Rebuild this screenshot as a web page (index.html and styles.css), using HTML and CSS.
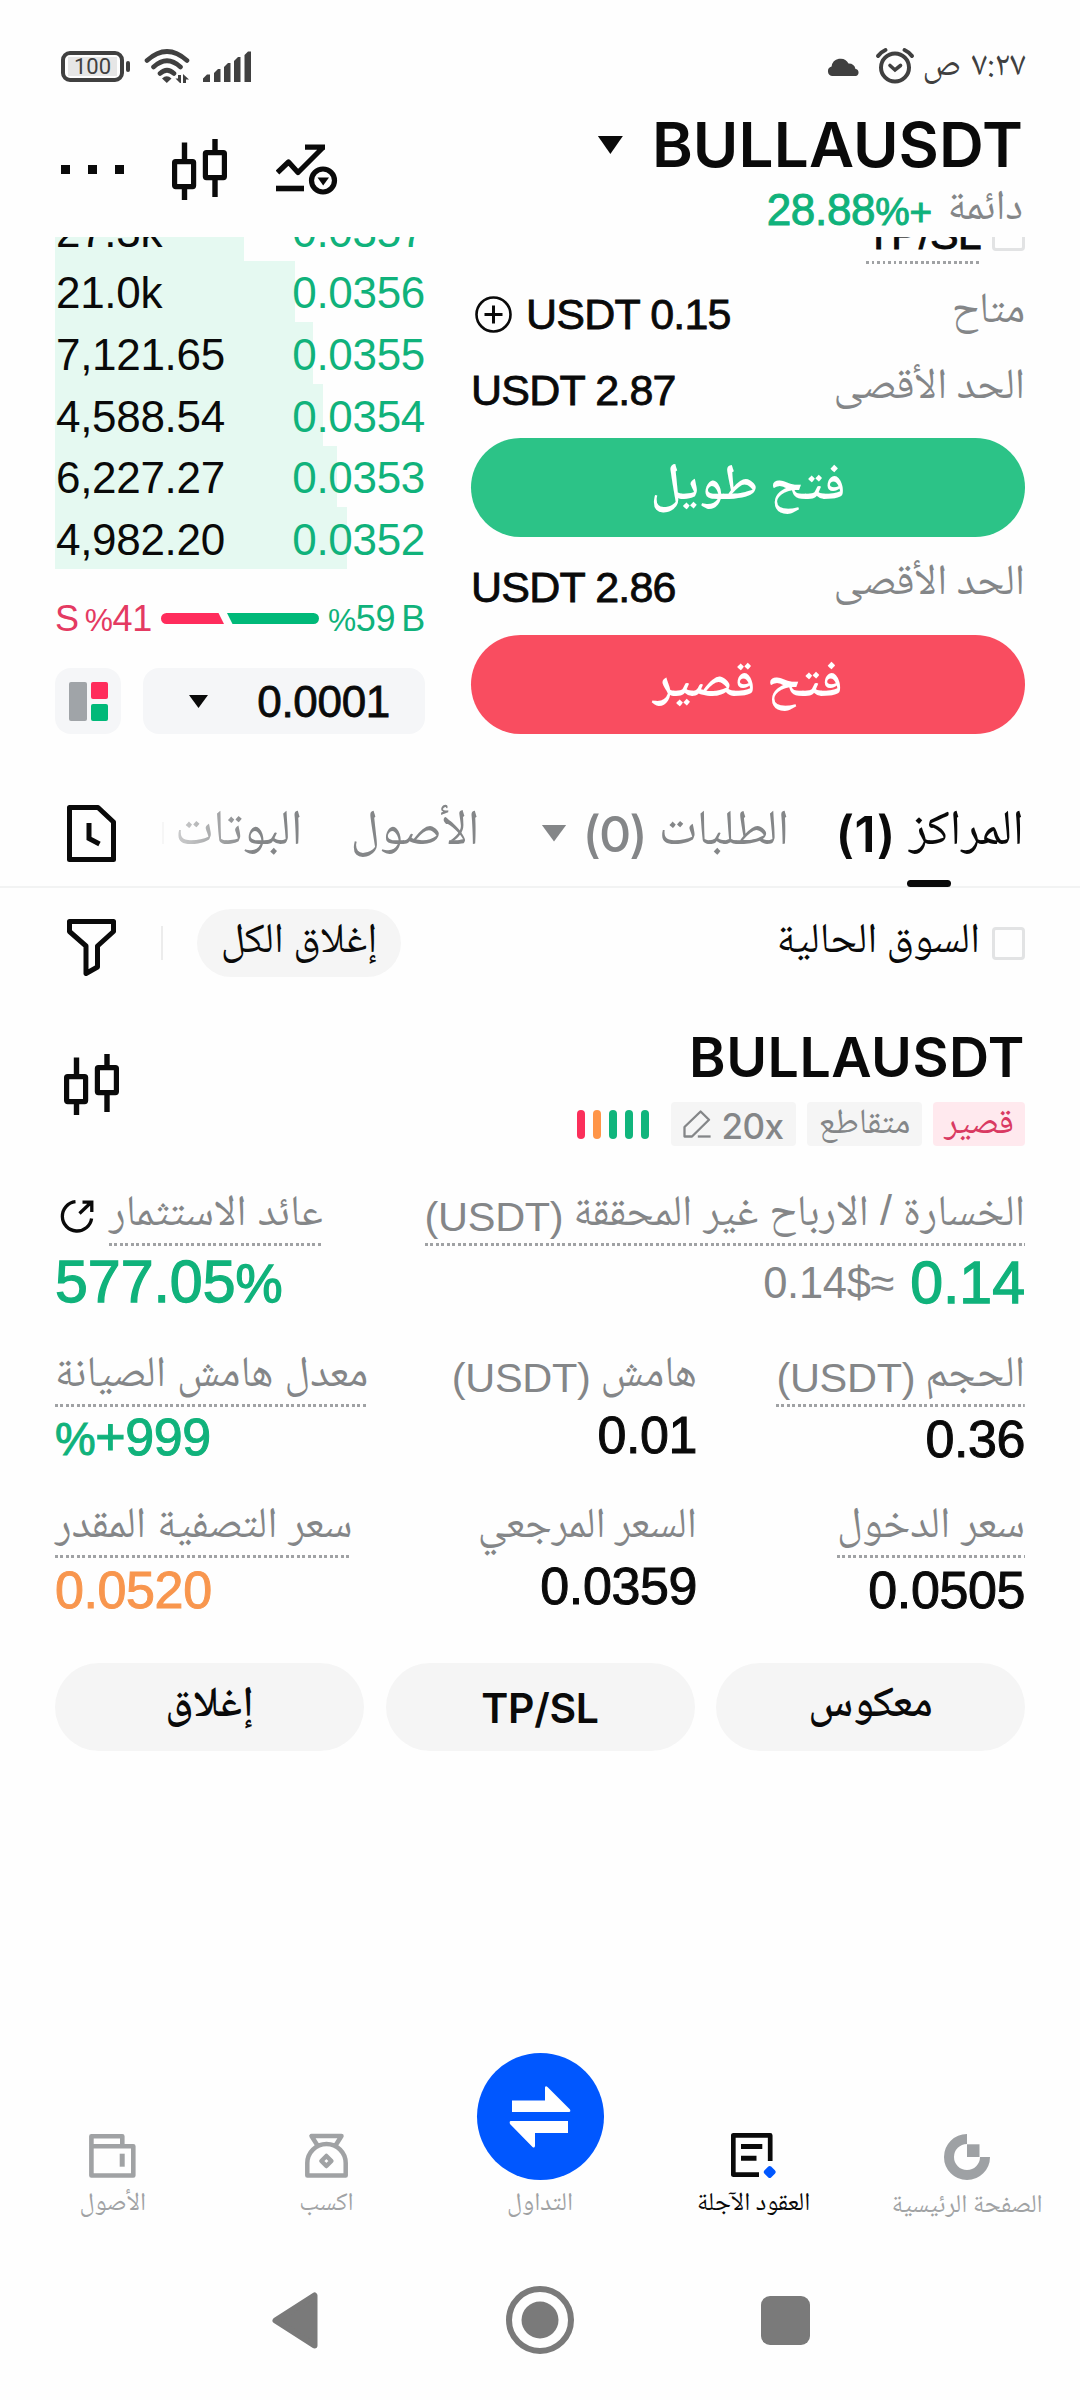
FILE: index.html
```html
<!DOCTYPE html>
<html lang="ar" dir="rtl">
<head>
<meta charset="utf-8">
<title>BULLAUSDT</title>
<link rel="stylesheet" href="styles.css">
</head>
<body>
<svg class="defs" aria-hidden="true">
  <symbol id="candles" viewBox="0 0 55 61">
    <path d="M12.5 3.5V21M12.5 49V61M43 0V12M43 40V58" fill="none" stroke="currentColor" stroke-width="5.4"/>
    <rect x="2.6" y="22.6" width="19" height="25" rx="1" fill="none" stroke="currentColor" stroke-width="5.2"/>
    <rect x="33.4" y="13.6" width="19" height="25" rx="1" fill="none" stroke="currentColor" stroke-width="5.2"/>
  </symbol>
</svg>

<div class="status">
  <div class="status-start">
    <span class="clock">٧:٢٧ ص</span>
    <svg class="alarm" viewBox="0 0 40 38" width="40" height="38"><circle cx="20" cy="20.5" r="14" fill="none" stroke="#404040" stroke-width="4"/><path d="M3 9Q6 5 10.500 3M29.500 3Q34 5 37 9" fill="none" stroke="#404040" stroke-width="4" stroke-linecap="round"/><path d="M15 18.500L20 23L25.500 18.500" fill="none" stroke="#404040" stroke-width="3.600" stroke-linecap="round"/></svg>
    <svg class="cloud" viewBox="0 0 33 19" width="33" height="19"><path d="M5 19A4.800 4.800 0 0 1 4.600 9.600A9 9 0 0 1 21.500 6.500A7 7 0 0 1 28.500 12A3.600 3.600 0 0 1 29 19Z" fill="#404040"/></svg>
  </div>
  <div class="status-end" dir="ltr">
    <div class="battery"><span>100</span></div>
    <svg class="wifi" viewBox="0 0 48 34" width="48" height="34"><path d="M3 11.500Q23 -6.500 43 11.500M9.500 18Q23 5.500 36.500 18M16 24.500Q23 18 30 24.500" fill="none" stroke="#404040" stroke-width="4.600" stroke-linecap="round"/><path d="M18 29.500Q22.800 25 27.500 29.500L22.800 34Z" fill="#404040"/><path d="M31.500 29.500H34V26H37V34H36ZM39 25L45 30.500H42V34H39Z" fill="#404040"/></svg>
    <svg class="signal" viewBox="0 0 48 31" width="48" height="31"><path d="M0 31V27.500L4 23.500H7V31ZM11 31V22L15 18H17.500V31ZM21 31V16L25 12H27.500V31ZM31 31V10L35 6H37.500V31ZM41.500 31V4L45 .5H48V31Z" fill="#404040"/></svg>
  </div>
</div>

<header class="head">
  <div class="head-pair">
    <div class="pair-line"><h1>BULLAUSDT</h1><i class="caret caret-lg"></i></div>
    <div class="pair-sub"><span class="ar muted">دائمة</span><span class="num up change" dir="ltr">28.88<small>%+</small></span></div>
  </div>
  <div class="head-tools">
    <svg viewBox="0 0 62 51" width="62" height="51"><path d="M1.500 28.500L12.500 18L22 28.500L47 3.500M29 3.200H49" fill="none" stroke="#0a0a0a" stroke-width="5.200" stroke-linejoin="round"/><path d="M0 44.500H28" stroke="#0a0a0a" stroke-width="5.600"/><circle cx="47" cy="36.500" r="11.500" fill="none" stroke="#0a0a0a" stroke-width="5.200"/><path d="M41.500 33.500H53L47.200 41.500Z" fill="#0a0a0a"/></svg>
    <svg class="tool-candles" width="55" height="61"><use href="#candles"/></svg>
    <div class="dots"><i></i><i></i><i></i></div>
  </div>
</header>

<section class="trade">
  <div class="form">
    <div class="tpsl"><i class="check"></i><span class="num mid tpsl-label" dir="ltr">TP/SL</span></div>
    <div class="line line-avail"><span class="ar muted">متاح</span><span class="avail" dir="ltr"><svg viewBox="0 0 37 37" width="37" height="37"><circle cx="18.500" cy="18.500" r="17" fill="none" stroke="#0a0a0a" stroke-width="2.600"/><path d="M18.500 9.500V27.500M9.500 18.500H27.500" stroke="#0a0a0a" stroke-width="3"/></svg><span class="num mid">USDT 0.15</span></span></div>
    <div class="line line-long"><span class="ar muted">الحد الأقصى</span><span class="num mid" dir="ltr">USDT 2.87</span></div>
    <div class="btn btn-long"><span class="ar strong">فتح طويل</span></div>
    <div class="line line-short"><span class="ar muted">الحد الأقصى</span><span class="num mid" dir="ltr">USDT 2.86</span></div>
    <div class="btn btn-short"><span class="ar strong">فتح قصير</span></div>
  </div>

  <div class="book" dir="ltr">
    <div class="bids">
      <div class="bid"><i style="width:189px"></i><span class="num">27.3k</span><span class="num up">0.0357</span></div>
      <div class="bid"><i style="width:240px"></i><span class="num">21.0k</span><span class="num up">0.0356</span></div>
      <div class="bid"><i style="width:258px"></i><span class="num">7,121.65</span><span class="num up">0.0355</span></div>
      <div class="bid"><i style="width:268px"></i><span class="num">4,588.54</span><span class="num up">0.0354</span></div>
      <div class="bid"><i style="width:282px"></i><span class="num">6,227.27</span><span class="num up">0.0353</span></div>
      <div class="bid"><i style="width:292px"></i><span class="num">4,982.20</span><span class="num up">0.0352</span></div>
    </div>
    <div class="ratio">
      <span class="num down">S<b></b><small>%</small>41</span>
      <svg viewBox="0 0 158 11" width="158" height="11"><path d="M5.500 0H57.500L63 11H5.500A5.500 5.500 0 0 1 5.500 0Z" fill="#ff2c5c"/><path d="M66 0H152.500A5.500 5.500 0 0 1 152.500 11H71.500Z" fill="#00b979"/></svg>
      <span class="num up"><small>%</small>59<b></b>B</span>
    </div>
    <div class="controls">
      <div class="layout-btn"><svg viewBox="0 0 39 39" width="39" height="39"><rect width="18" height="39" rx="2" fill="#a0a4a8"/><rect x="22" width="17" height="17" rx="2" fill="#ff2c5c"/><rect x="22" y="22" width="17" height="17" rx="2" fill="#00b979"/></svg></div>
      <div class="step"><i class="caret caret-sm"></i><span class="num mid">0.0001</span></div>
    </div>
  </div>
</section>

<nav class="tabs">
  <div class="tab tab-on"><span class="ar">المراكز</span><span class="count" dir="ltr">(1)</span></div>
  <div class="tab tab-orders"><span class="ar">الطلبات</span><span class="count count-zero" dir="ltr">(0)</span><i class="caret caret-md"></i></div>
  <div class="tab tab-assets"><span class="ar">الأصول</span></div>
  <div class="tab tab-bots"><span class="ar">البوتات</span></div>
  <i class="sep sep-faint"></i>
  <svg class="doc" viewBox="0 0 49 57" width="49" height="57"><path d="M2.500 2.500H31L46.500 17V54.500H2.500Z" fill="none" stroke="#0a0a0a" stroke-width="5" stroke-linejoin="round"/><path d="M22 18V33.500L32.500 39" fill="none" stroke="#0a0a0a" stroke-width="5"/></svg>
</nav>

<div class="filter">
  <i class="check"></i><span class="ar filter-label">السوق الحالية</span>
  <div class="close-all"><span class="ar">إغلاق الكل</span></div>
  <i class="sep"></i>
  <svg class="funnel" viewBox="0 0 49 57" width="49" height="57"><path d="M2.500 2.500H46.500V12.500L30.500 27V48L19 54.500V27L2.500 12.500Z" fill="none" stroke="#0a0a0a" stroke-width="5" stroke-linejoin="round"/></svg>
</div>

<section class="position">
  <div class="pos-head">
    <div class="pos-title">
      <h2>BULLAUSDT</h2>
      <div class="tags">
        <span class="tag tag-short"><span class="ar">قصير</span></span>
        <span class="tag tag-mode"><span class="ar">متقاطع</span></span>
        <span class="tag tag-lev" dir="ltr"><svg viewBox="0 0 28 28" width="28" height="28"><path d="M1.500 26.500V17L17.600 1.500L26 9.800L9 26.500Z" fill="none" stroke="#848688" stroke-width="2.300" stroke-linejoin="round"/><path d="M14.800 26.500H27.600" stroke="#848688" stroke-width="2.300"/></svg><span class="lev">20x</span></span>
        <span class="risk"><i></i><i></i><i></i><i class="warn"></i><i class="danger"></i></span>
      </div>
    </div>
    <svg class="pos-candles" width="55" height="61"><use href="#candles"/></svg>
  </div>

  <div class="pnl">
    <div class="cell">
      <div class="label dotted"><span class="ar">الخسارة <span class="slash">/</span> الارباح غير المحققة</span><span class="num" dir="ltr">(USDT)</span></div>
      <div class="value"><span class="num big up" dir="ltr">0.14</span><span class="num approx" dir="ltr">0.14$≈</span></div>
    </div>
    <div class="cell cell-end">
      <div class="roi"><div class="label dotted"><span class="ar">عائد الاستثمار</span></div><svg viewBox="0 0 34 35" width="34" height="35"><path d="M15.500 2.700A14.700 14.700 0 1 0 31.600 19.500M19.500 14.500L31 3.500M22.500 3.200H31.800V13" fill="none" stroke="#0a0a0a" stroke-width="3.300"/></svg></div>
      <div class="value"><span class="num big up" dir="ltr">577.05<small>%</small></span></div>
    </div>
  </div>

  <div class="stats">
    <div class="cell"><div class="label dotted"><span class="ar">الحجم</span><span class="num" dir="ltr">(USDT)</span></div><div class="value"><span class="num val" dir="ltr">0.36</span></div></div>
    <div class="cell"><div class="label"><span class="ar">هامش</span><span class="num" dir="ltr">(USDT)</span></div><div class="value value-raised"><span class="num val" dir="ltr">0.01</span></div></div>
    <div class="cell cell-end"><div class="label dotted"><span class="ar">معدل هامش الصيانة</span></div><div class="value"><span class="num val up" dir="ltr"><small>%</small>+999</span></div></div>
  </div>
  <div class="stats stats-price">
    <div class="cell"><div class="label dotted"><span class="ar">سعر الدخول</span></div><div class="value"><span class="num val" dir="ltr">0.0505</span></div></div>
    <div class="cell"><div class="label label-mark"><span class="ar">السعر المرجعي</span></div><div class="value value-raised"><span class="num val" dir="ltr">0.0359</span></div></div>
    <div class="cell cell-end"><div class="label dotted"><span class="ar">سعر التصفية المقدر</span></div><div class="value"><span class="num val liq" dir="ltr">0.0520</span></div></div>
  </div>

  <div class="actions">
    <div class="action"><span class="ar strong">معكوس</span></div>
    <div class="action"><span class="action-en" dir="ltr">TP/SL</span></div>
    <div class="action"><span class="ar strong">إغلاق</span></div>
  </div>
</section>

<nav class="bottom">
  <div class="item"><div class="icon icon-home"><svg viewBox="0 0 46 46" width="46" height="46"><path d="M23 5A18 18 0 1 0 41 23" fill="none" stroke="#9ea1a4" stroke-width="10"/><rect x="23" y="10.300" width="12.500" height="12.700" fill="#9ea1a4"/></svg></div><span class="ar">الصفحة الرئيسية</span></div>
  <div class="item item-on"><div class="icon"><svg viewBox="0 0 46 46" width="46" height="46"><path d="M39.200 28V2.400H2.300V41.600H28" fill="none" stroke="#0a0a0a" stroke-width="4.700" stroke-linejoin="round"/><path d="M10 13.600H31.300M10 25.200H25.500" stroke="#0a0a0a" stroke-width="5"/><path d="M38.700 35L42.700 39L38.700 43L34.700 39Z" fill="#0057ff" stroke="#0057ff" stroke-width="4" stroke-linejoin="round"/></svg></div><span class="ar">العقود الآجلة</span></div>
  <div class="item"><div class="fab"><svg viewBox="0 0 62 62" width="62" height="62"><path d="M3 14.500H36V1.500Q36.500 -.5 38.500 1L61 23.500Q62 26 60 26H3ZM59 35V47H26V60Q25.500 62.500 23.500 61L1 38Q0 35 2 35Z" fill="#fff"/></svg></div><span class="ar">التداول</span></div>
  <div class="item"><div class="icon"><svg viewBox="0 0 43 46" width="43" height="46"><path d="M12.500 12.500L6.500 3H36.500L30.500 12.500M2.300 42.500V30A19.200 19 0 0 1 40.700 30V42.500Z" fill="none" stroke="#a0a2a4" stroke-width="4.500" stroke-linejoin="round"/><path d="M21.400 23L26.400 28L21.400 33L16.400 28Z" fill="none" stroke="#a0a2a4" stroke-width="4.500" stroke-linejoin="round"/></svg></div><span class="ar">اكسب</span></div>
  <div class="item"><div class="icon"><svg viewBox="0 0 47 46" width="47" height="46"><path d="M33.300 12V3.200H2.400V42.500H44.300V13.300H2.400" fill="none" stroke="#a0a2a4" stroke-width="4.600" stroke-linejoin="round"/><path d="M33.200 20.700V33.700" stroke="#a0a2a4" stroke-width="5"/></svg></div><span class="ar">الأصول</span></div>
</nav>

<div class="system">
  <i class="sys-recent"></i>
  <svg class="sys-home" viewBox="0 0 68 68" width="68" height="68"><circle cx="34" cy="34" r="31" fill="none" stroke="#7a7a7a" stroke-width="6"/><circle cx="34" cy="34" r="18.500" fill="#7a7a7a"/></svg>
  <svg class="sys-back" viewBox="0 0 46 57" width="46" height="57"><path d="M42.500 3.500V53.500L3.500 28.500Z" fill="#7a7a7a" stroke="#7a7a7a" stroke-width="6" stroke-linejoin="round"/></svg>
</div>
</body>
</html>
```
FILE: styles.css
```css
* { box-sizing: border-box; }
body {
  margin: 0;
  width: 1080px;
  height: 2400px;
  overflow: hidden;
  background: #fefefe;
  color: #0a0a0a;
  font-family: "Liberation Sans", Arial, sans-serif;
}
i { display: block; }
svg { display: block; flex: none; }
h1, h2 { margin: 0; font-family: Inter, "Liberation Sans", sans-serif; font-weight: 600; }
.defs { position: absolute; width: 0; height: 0; }

.ar { font-family: "Noto Naskh Arabic", "DejaVu Sans", sans-serif; font-size: 42px; line-height: 60px; white-space: nowrap; display: block; }
.num { font-size: 44px; line-height: 60px; letter-spacing: -0.3px; white-space: nowrap; display: block; }
.num small { font-size: 0.880em; }
.mid { -webkit-text-stroke: 0.8px currentColor; }
.strong { font-weight: 600; }
.muted { color: #848688; }
.up { color: #10b27b; }
.down { color: #e43a62; }

.caret { background: currentColor; clip-path: polygon(0 0, 100% 0, 50% 100%); }
.caret-lg { width: 25px; height: 18px; }
.caret-md { width: 25px; height: 17px; }
.caret-sm { width: 19px; height: 13px; }
.check { width: 33px; height: 33px; border: 3px solid #e2e3e4; border-radius: 4px; flex: none; }

/* Status bar */
.status { height: 112px; padding: 20px 54px 0 61px; display: flex; justify-content: space-between; align-items: center; color: #404040; }
.status-start, .status-end { display: flex; align-items: center; }
.clock { font: 35px/60px "Noto Naskh Arabic", "DejaVu Sans", sans-serif; word-spacing: 3px; padding-top: 3px; }
.alarm { margin-right: 8px; }
.cloud { margin-right: 15px; }
.wifi { margin-left: 20px; }
.signal { margin-left: 11px; }
.battery { width: 63px; height: 31px; border: 4px solid #404040; border-radius: 9px; padding: 2px 3px; position: relative; }
.battery span { display: block; height: 19px; background: #e6e6e6; font: 22px/19px Roboto, sans-serif; text-align: center; }
.battery::after { content: ""; position: absolute; right: -10px; top: 6px; width: 4px; height: 11px; border-radius: 2px; background: #404040; }

/* Header */
.head { height: 125px; padding: 0 57px 0 61px; display: flex; justify-content: space-between; }
.pair-line { display: flex; align-items: center; gap: 29px; height: 66px; }
h1 { font-size: 62px; line-height: 66px; letter-spacing: 0.1px; }
.pair-sub { display: flex; align-items: center; gap: 16px; height: 59px; padding-top: 4px; }
.change { -webkit-text-stroke: 1px currentColor; padding-top: 2px; }
.head-tools { display: flex; align-items: center; height: 115px; }
.tool-candles { margin-right: 49px; }
.dots { display: flex; gap: 18px; margin-right: 48px; }
.dots i { width: 9px; height: 9px; background: #0a0a0a; }

/* Order form and book */
.trade { height: 497px; padding: 0 55px; display: flex; justify-content: space-between; overflow: hidden; }
.form { width: 554px; display: flex; flex-direction: column; justify-content: flex-end; }
.form > * { flex: none; }
.form .num { font-size: 43px; letter-spacing: -0.8px; }
.form .line .ar { font-size: 43px; }
.tpsl { height: 70px; display: flex; align-items: flex-start; gap: 11px; padding-top: 2px; }
.form .tpsl-label { line-height: 32px; height: 46px; background: repeating-linear-gradient(90deg, #a0a2a4 0 2.750px, transparent 2.750px 5.500px) bottom / 100% 3px no-repeat; }
.line { display: flex; justify-content: space-between; align-items: center; }
.line .ar { margin-top: -3px; }
.line-avail { height: 56px; }
.line-long { height: 96px; }
.line-short { height: 98px; padding-top: 1px; }
.avail { display: flex; align-items: center; gap: 14px; padding-left: 4px; }
.btn { height: 99px; border-radius: 50px; display: flex; align-items: center; justify-content: center; color: #fff; }
.btn .ar { font-size: 51px; }
.btn-long { background: #2cc387; }
.btn-short { background: #f94d60; }
.book { width: 370px; }
.bids { height: 332px; display: flex; flex-direction: column; justify-content: flex-end; }
.bid { height: 61.700px; flex: none; display: flex; justify-content: space-between; align-items: center; position: relative; padding: 4px 0 0 1px; }
.bid i { position: absolute; left: 0; top: 0; bottom: -1px; background: #e5f9f1; }
.bid:last-child i { bottom: 0; }
.bid .num { position: relative; }
.ratio { height: 99px; display: flex; align-items: center; justify-content: space-between; }
.ratio .num { font-size: 36px; padding-top: 2px; }
.ratio b { display: inline-block; width: 6px; }
.controls { display: flex; justify-content: space-between; }
.layout-btn { width: 66px; height: 66px; border-radius: 16px; background: #f5f6f8; display: flex; align-items: center; justify-content: center; }
.step { width: 282px; height: 66px; border-radius: 16px; background: #f5f6f8; display: flex; align-items: center; justify-content: space-between; padding: 1px 35px 0 46px; }

/* Tabs */
.tabs { height: 154px; padding: 46px 56px 0 67px; display: flex; align-items: center; border-bottom: 2px solid #f2f3f3; color: #848688; }
.tabs .ar { font-size: 49.500px; }
.tab { display: flex; align-items: center; gap: 13px; }
.count { font: 600 50px/60px Inter, "Liberation Sans", sans-serif; padding-top: 2px; letter-spacing: 0.500px; }
.count-zero { font-weight: 500; letter-spacing: -2px; }
.tab-on { color: #0a0a0a; position: relative; }
.tab-on::after { content: ""; position: absolute; left: 72px; bottom: -23px; width: 44px; height: 7px; border-radius: 4px; background: #0a0a0a; }
.tab-orders { margin-right: 46px; }
.tab-orders .caret { margin-right: 3px; }
.tab-assets { margin-right: 62px; }
.tab-bots { margin-right: 48px; -webkit-mask: linear-gradient(90deg, rgba(0,0,0,.4), #000 60%); mask: linear-gradient(90deg, rgba(0,0,0,.4), #000 60%); }
.sep { width: 2px; height: 34px; background: #ececec; margin-right: auto; }
.sep-faint { height: 22px; background: #f6f6f6; }
.doc { margin-right: 46px; }

/* Filter row */
.filter { height: 110px; padding: 0 55px 0 67px; display: flex; align-items: center; }
.filter-label { margin-right: 12px; }
.close-all { width: 204px; height: 68px; border-radius: 34px; background: #f5f5f5; display: flex; justify-content: center; align-items: center; margin-right: auto; }
.filter .sep { margin: 0 34px 0 45px; }
.funnel { margin-top: 8px; }

/* Position card */
.position { padding: 26px 55px 0; }
.pos-head { height: 122px; display: flex; justify-content: space-between; }
.pos-candles { margin: 30px 0 0 9px; }
h2 { font-size: 55.500px; line-height: 66px; letter-spacing: 0.500px; }
.tags { display: flex; height: 44px; margin-top: 12px; }
.tag { height: 44px; border-radius: 4px; background: #f5f5f5; color: #848688; display: flex; align-items: center; justify-content: center; }
.tag .ar { font-size: 35.500px; line-height: 44px; padding-top: 3px; }
.tag-short { width: 92px; background: #ffe9ee; color: #d93a62; }
.tag-mode { width: 115px; margin-right: 11px; }
.tag-lev { width: 125px; margin-right: 11px; gap: 10px; font: 500 35px/44px Inter, sans-serif; letter-spacing: -0.500px; }
.lev { padding-top: 3px; }
.risk { display: flex; gap: 8px; align-items: center; margin-right: 22px; }
.risk i { width: 8px; height: 29px; border-radius: 4px; background: #10b57c; }
.risk .warn { background: #ff9548; }
.risk .danger { background: #fb2f5a; }

.pnl { display: flex; justify-content: space-between; margin-top: 40px; }
.cell { display: flex; flex-direction: column; align-items: flex-start; }
.cell-end { align-items: flex-end; }
.label { height: 60px; display: flex; gap: 10px; color: #848688; }
.label .ar { font-size: 43.200px; word-spacing: 1.500px; }
.label .num { font-size: 41.500px; padding-top: 1px; }
.label-mark .ar { font-size: 42.500px; word-spacing: 0; }
.slash { font-family: "Liberation Sans", sans-serif; line-height: 0; }
.dotted { background: repeating-linear-gradient(90deg, #a0a2a4 0 2.750px, transparent 2.750px 5.500px) bottom / 100% 3px no-repeat; }
.roi { display: flex; align-items: center; gap: 15px; padding-left: 5px; }
.value { height: 74px; display: flex; align-items: center; gap: 16px; }
.big { font-size: 59px; letter-spacing: 0; -webkit-text-stroke: 1.300px currentColor; }
.num.big small { font-size: 53px; }
.approx { color: #848688; font-size: 43.500px; }
.stats { display: grid; grid-template-columns: 328px 328px 1fr; margin-top: 27px; }
.stats-price { margin-top: 17px; }
.stats .value { padding-bottom: 11px; }
.val { font-size: 52px; letter-spacing: -0.400px; -webkit-text-stroke: 1px currentColor; }
.value-raised { margin-top: -4px; }
.liq { color: #f8964e; }
.actions { display: flex; justify-content: space-between; margin-top: 31px; }
.action { width: 309px; height: 88px; border-radius: 44px; background: #f5f5f5; display: flex; align-items: center; justify-content: center; }
.action .ar { font-size: 43px; }
.action-en { font: 600 41px/60px Inter, sans-serif; letter-spacing: -0.300px; padding-top: 2px; }

/* Bottom navigation */
.bottom { display: flex; padding: 0 6px; margin-top: 302px; height: 177px; align-items: flex-end; }
.item { flex: 1; display: flex; flex-direction: column; align-items: center; color: #a0a2a4; }
.item-on { color: #0a0a0a; }
.item .ar { font-size: 25.500px; line-height: 50px; }
.fab { width: 127px; height: 127px; border-radius: 50%; background: #0057ff; display: flex; align-items: center; justify-content: center; }
.icon { height: 47px; }
.icon-home { padding-top: 1px; }
.icon-home + .ar { height: 50px; padding-top: 2px; }

/* System navigation */
.system { display: flex; align-items: center; height: 180px; padding: 0 270px 0 272px; justify-content: space-between; }
.sys-recent { width: 49px; height: 49px; border-radius: 9px; background: #7a7a7a; }
```
